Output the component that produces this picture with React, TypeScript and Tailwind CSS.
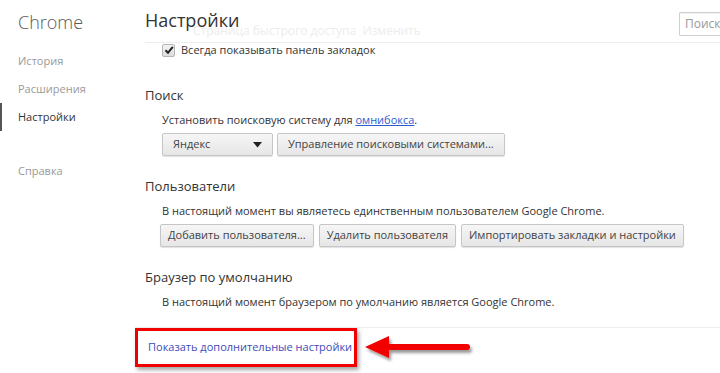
import React from "react";

const btn =
  "h-[23px] flex items-center whitespace-nowrap text-[11px] text-[#444] border border-[#c6c6c6] rounded-[2px] bg-gradient-to-b from-[#f6f6f6] to-[#e6e6e6] shadow-[0_1px_1px_rgba(0,0,0,0.12)]";

export default function App() {
  return (
    <div
      className="w-[720px] h-[373px] overflow-hidden bg-white flex text-[#333]"
      style={{ fontFamily: '"Open Sans", "Noto Sans", sans-serif' }}
    >
      {/* Left nav */}
      <div className="w-[135px] shrink-0 flex flex-col">
        <div className="pl-[18px] pt-[8px] h-[47px] text-[18px] font-light text-[#5a5a5a] leading-[28px]">
          Chrome
        </div>
        <div className="flex flex-col text-[11px] leading-[28px]">
          <div className="pl-[18px] text-[#999]">История</div>
          <div className="pl-[18px] text-[#999]">Расширения</div>
          <div className="pl-[16px] text-[#333] border-l-2 border-[#555]">Настройки</div>
          <div className="pl-[18px] text-[#999] mt-[26px]">Справка</div>
        </div>
      </div>

      {/* Main */}
      <div className="flex-1 flex flex-col">
        <div className="relative ml-[10px] h-[43px] border-b border-[#eeeeee] flex justify-between items-start">
          <span className="absolute left-[48px] top-[23px] text-[12px] leading-[16px] text-[#ededed] whitespace-nowrap">
            Страница быстрого доступа&nbsp;&nbsp;Изменить
          </span>
          <div className="relative pt-[6px] text-[18px] leading-[28px] text-[#333]">Настройки</div>
          <div className="mt-[12px] w-[41px] h-[24px] border border-r-0 border-[#cfcfcf] rounded-l-[2px] text-[12px] text-[#999] pl-[5px] leading-[22px] shadow-[inset_0_1px_1px_rgba(0,0,0,0.06)] overflow-hidden whitespace-nowrap">
            Поиск
          </div>
        </div>

        <div className="flex flex-col pl-[27px]">
          <div className="flex items-center h-[14px]">
            <div className="w-[13px] h-[13px] border border-[#b5b5b5] rounded-[2px] bg-gradient-to-b from-[#f4f4f4] to-[#dcdcdc] flex items-center justify-center">
              <svg width="10" height="10" viewBox="0 0 10 10">
                <path d="M1.5 5.2 L4 7.8 L8.8 1.8" fill="none" stroke="#222" strokeWidth="2" />
              </svg>
            </div>
            <span className="ml-[6px] text-[11px] leading-[14px]">Всегда показывать панель закладок</span>
          </div>
        </div>

        <div className="ml-[10px] mt-[28px] text-[13px] leading-[20px]">Поиск</div>
        <div className="pl-[27px] flex flex-col">
          <div className="mt-[7px] text-[11px] leading-[16px]">
            Установить поисковую систему для{" "}
            <span className="text-[#2f5bd0] underline">омнибокса</span>.
          </div>
          <div className="mt-[5px] flex gap-[4px]">
            <div className={btn + " px-[10px] w-[111px] justify-between"}>
              <span>Яндекс</span>
              <svg width="9" height="6" viewBox="0 0 9 6">
                <path d="M0 0 H9 L4.5 5.5 Z" fill="#222" />
              </svg>
            </div>
            <div className={btn + " px-[10px]"}>Управление поисковыми системами...</div>
          </div>
        </div>

        <div className="ml-[10px] mt-[20px] text-[13px] leading-[20px]">Пользователи</div>
        <div className="pl-[25px] flex flex-col">
          <div className="mt-[7px] pl-[2px] text-[11px] leading-[16px]">
            В настоящий момент вы являетесь единственным пользователем Google Chrome.
          </div>
          <div className="mt-[5px] flex gap-[5px]">
            <div className={btn + " px-[7px]"}>Добавить пользователя...</div>
            <div className={btn + " px-[7px]"}>Удалить пользователя</div>
            <div className={btn + " px-[7px]"}>Импортировать закладки и настройки</div>
          </div>
        </div>

        <div className="ml-[10px] mt-[20px] text-[13px] leading-[20px]">Браузер по умолчанию</div>
        <div className="pl-[27px] mt-[7px] text-[11px] leading-[16px]">
          В настоящий момент браузером по умолчанию является Google Chrome.
        </div>

        <div className="mt-[17px] border-t border-[#eeeeee] flex items-center">
          <div className="w-[222px] h-[39px] border-[3px] border-[#f20000] shadow-[2px_3px_4px_rgba(0,0,0,0.35)] flex items-center pl-[10px]">
            <span className="text-[11px] text-[#3d4cb8] whitespace-nowrap">Показать дополнительные настройки</span>
          </div>
          <svg width="120" height="34" viewBox="0 0 120 34" className="ml-[6px]">
            <defs>
              <filter id="sh" x="-10%" y="-30%" width="130%" height="180%">
                <feDropShadow dx="2" dy="3" stdDeviation="1.6" floodColor="#000" floodOpacity="0.4" />
              </filter>
            </defs>
            <g filter="url(#sh)">
              <path d="M2 16 L26 5 L26 13 L104 13 A3 3 0 0 1 104 19 L26 19 L26 27 Z" fill="#f20000" />
            </g>
          </svg>
        </div>
      </div>
    </div>
  );
}
